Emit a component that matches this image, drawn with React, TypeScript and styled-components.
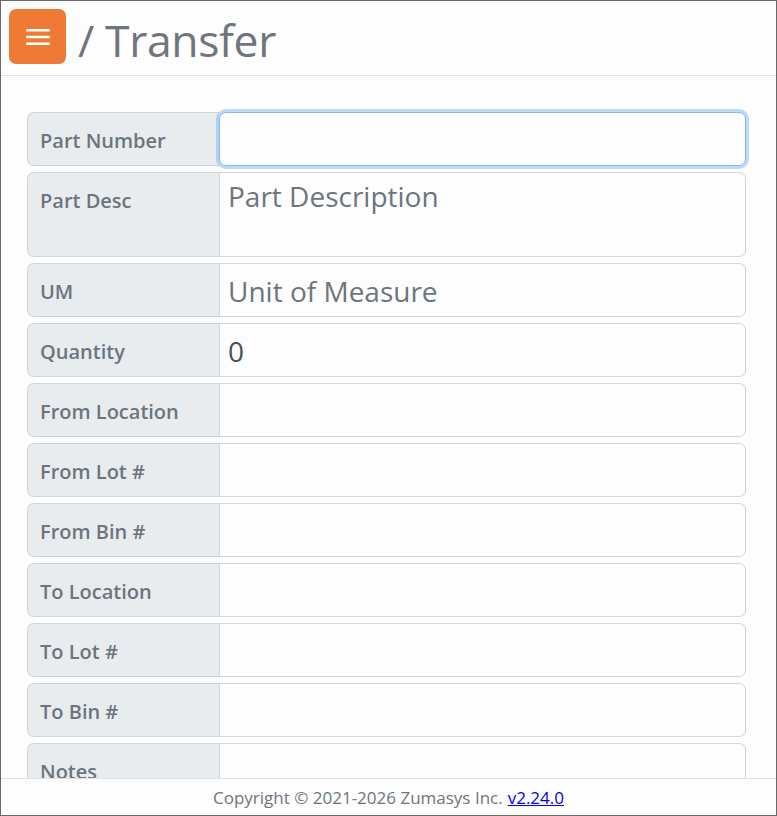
import React from "react";
import styled, { createGlobalStyle } from "styled-components";

const Global = createGlobalStyle`
  html, body { margin: 0; padding: 0; background: #fdfdfd; }
  * { box-sizing: border-box; }
`;

const Frame = styled.div`
  position: relative;
  width: 777px;
  height: 816px;
  border: 1px solid #6a6a6a;
  background: #fdfdfd;
  overflow: hidden;
  font-family: "Open Sans", "Noto Sans", sans-serif;
`;

const Header = styled.header`
  height: 75px;
  border-bottom: 1px solid #dee2e6;
  display: flex;
  align-items: flex-start;
  padding: 8px 0 0 8px;
  gap: 12px;
`;

const MenuButton = styled.button`
  width: 57px;
  height: 55px;
  border: none;
  border-radius: 7px;
  background: #ef7a36;
  display: flex;
  align-items: center;
  justify-content: center;
  padding: 0;
`;

const Title = styled.h1`
  margin: 0;
  font-weight: 400;
  font-size: 44.5px;
  line-height: 62px;
  color: #6f757c;
  letter-spacing: -0.4px;
`;

const Form = styled.div`
  display: flex;
  flex-direction: column;
  gap: 6px;
  padding: 36px 30px 0 26px;
`;

const Row = styled.div<{ $h: number }>`
  display: flex;
  height: ${(p) => p.$h}px;
`;

const Label = styled.label`
  flex: 0 0 192px;
  background: #e9ecef;
  border: 1px solid #ced4da;
  border-right: none;
  border-radius: 7px 0 0 7px;
  padding: 13px 12px;
  font-size: 20px;
  font-weight: 600;
  line-height: 30px;
  color: #6c757d;
  white-space: nowrap;
`;

const Field = styled.div<{ $focus?: boolean; $multi?: boolean }>`
  flex: 1;
  position: relative;
  background: #fdfdfd;
  border: 1px solid ${(p) => (p.$focus ? "#86b7fe" : "#ced4da")};
  border-radius: ${(p) => (p.$focus ? "7px" : "0 7px 7px 0")};
  box-shadow: ${(p) => (p.$focus ? "0 0 0 3px rgba(110, 176, 245, 0.45)" : "none")};
  padding: ${(p) => (p.$multi ? "3px 8px" : "7px 8px")};
  font-size: 28px;
  line-height: 40px;
  color: #495057;
  z-index: ${(p) => (p.$focus ? 2 : 0)};
`;

const Placeholder = styled.span`
  color: #6c757d;
`;

const Footer = styled.footer`
  position: absolute;
  left: 0;
  right: 0;
  bottom: 0;
  height: 37px;
  border-top: 1px solid #dee2e6;
  background: #fdfdfd;
  display: flex;
  align-items: center;
  justify-content: center;
  font-size: 17px;
  color: #6c757d;
  z-index: 5;
`;

const Link = styled.a`
  color: #0000ee;
  text-decoration: underline;
  margin-left: 5px;
`;

const rows: { label: string; h: number; value?: string; placeholder?: string; focus?: boolean }[] = [
  { label: "Part Number", h: 54, focus: true },
  { label: "Part Desc", h: 85, placeholder: "Part Description" },
  { label: "UM", h: 54, placeholder: "Unit of Measure" },
  { label: "Quantity", h: 54, value: "0" },
  { label: "From Location", h: 54 },
  { label: "From Lot #", h: 54 },
  { label: "From Bin #", h: 54 },
  { label: "To Location", h: 54 },
  { label: "To Lot #", h: 54 },
  { label: "To Bin #", h: 54 },
  { label: "Notes", h: 85 },
];

export default function App() {
  return (
    <>
      <Global />
      <Frame>
        <Header>
          <MenuButton aria-label="menu">
            <svg width="24" height="18" viewBox="0 0 24 18">
              <rect x="0" y="1" width="24" height="2.4" rx="1" fill="#fff" />
              <rect x="0" y="7.8" width="24" height="2.4" rx="1" fill="#fff" />
              <rect x="0" y="14.6" width="24" height="2.4" rx="1" fill="#fff" />
            </svg>
          </MenuButton>
          <Title>/ Transfer</Title>
        </Header>
        <Form>
          {rows.map((r) => (
            <Row key={r.label} $h={r.h}>
              <Label>{r.label}</Label>
              <Field $focus={r.focus} $multi={r.h > 54}>
                {r.placeholder ? <Placeholder>{r.placeholder}</Placeholder> : r.value}
              </Field>
            </Row>
          ))}
        </Form>
        <Footer>
          Copyright © 2021-2026 Zumasys Inc.<Link href="#">v2.24.0</Link>
        </Footer>
      </Frame>
    </>
  );
}
